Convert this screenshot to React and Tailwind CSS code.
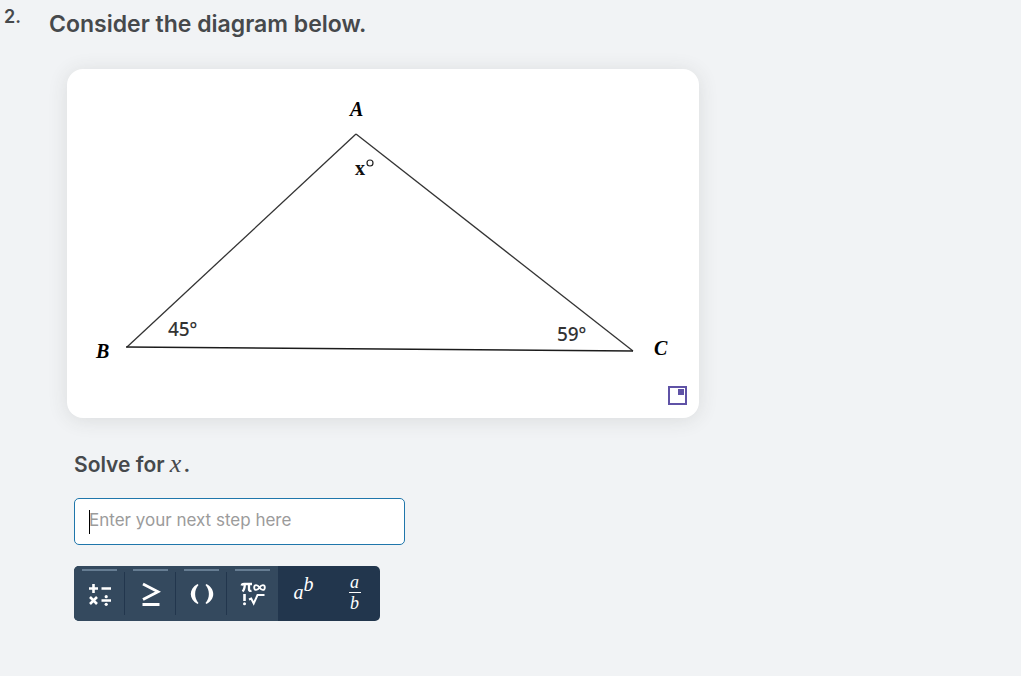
import { useState } from 'react';

const MathToolButton = ({ label, children }) => (
  <button
    type="button"
    aria-label={label}
    className="relative flex-1 flex items-center justify-center h-full bg-[#34495e] hover:bg-[#3d546b]"
  >
    <span className="absolute top-[3px] left-2 right-2 h-[2px] bg-[#667d93]" />
    {children}
  </button>
);

const Divider = () => <span className="w-px -ml-px my-1.5 bg-[#22364d] z-10" />;

const Triangle = () => (
  <svg viewBox="0 0 632 349" className="block w-full h-auto" role="img" aria-label="Triangle ABC">
    <g fill="none" stroke="#333" strokeWidth="1.3" strokeLinejoin="round">
      <path d="M289 65 L60 278" />
      <path d="M289 65 L566 282" />
      <path d="M59 278 L566 282" stroke="#1c1c1c" strokeWidth="1.6" />
    </g>
    <g fontFamily="'Liberation Serif', serif" fontWeight="700" fontStyle="italic" fontSize="20" fill="#000">
      <text x="283" y="47">A</text>
      <text x="29" y="289">B</text>
      <text x="587" y="286">C</text>
    </g>
    <text x="288" y="106" fontFamily="'Liberation Serif', serif" fontWeight="700" fontSize="20" fill="#111">x</text>
    <circle cx="303" cy="94" r="3" fill="none" stroke="#222" strokeWidth="1.2" />
    <g fontFamily="'Noto Sans', sans-serif" fontWeight="500" fontSize="19" fill="#333">
      <text x="101" y="267">45º</text>
      <text x="490" y="272">59º</text>
    </g>
  </svg>
);

const App = () => {
  const [step, setStep] = useState('');

  return (
    <main className="min-h-screen flex items-start bg-[#f1f3f5] pl-1 font-[Inter,sans-serif] text-[#46494c]">
      <span className="w-[45px] shrink-0 pt-1 text-lg leading-[26px] font-semibold">2.</span>

      <div className="flex-1 min-w-0 pr-4">
        <h1 className="pt-2 text-[23px] leading-8 font-semibold">Consider the diagram below.</h1>

        {/* DIAGRAM */}
        <div className="relative mt-[29px] ml-[18px] max-w-[632px] rounded-2xl bg-white shadow-[0_2px_20px_rgba(60,60,50,0.12)]">
          <Triangle />
          <button type="button" aria-label="Expand diagram" className="absolute right-3 bottom-[13px] cursor-pointer">
            <svg width="20" height="20" viewBox="0 0 20 20" className="block">
              <rect x="2" y="2" width="17" height="17" fill="none" stroke="#5f52a6" strokeWidth="2" />
              <rect x="11" y="4" width="6" height="6" fill="#5f52a6" />
            </svg>
          </button>
        </div>

        {/* ANSWER */}
        <div className="mt-8 ml-[25px]">
          <label htmlFor="step" className="block h-7 text-[21px] leading-7 font-semibold">
            Solve for <span className="mr-0.5 font-['Liberation_Serif',serif] font-normal italic text-[26px] leading-7">x</span>.
          </label>

          <div className="relative mt-5 max-w-[331px]">
            <input
              id="step"
              type="text"
              value={step}
              placeholder="Enter your next step here"
              autoComplete="off"
              onChange={(e) => setStep(e.target.value)}
              className="block w-full h-[47px] px-3.5 pb-1 bg-white border border-[#1f76ab] rounded-[5px] text-[17px] outline-none placeholder:text-[#9b9b9b]"
            />
            {!step && <span className="absolute left-[15px] top-3 w-px h-6 bg-black pointer-events-none" />}
          </div>

          {/* MATH TOOLBAR */}
          <div className="flex mt-[21px] max-w-[306px] h-[55px] rounded-[5px] overflow-hidden bg-[#22364d] text-white">
            <MathToolButton label="Operators">
              <svg width="24" height="24" viewBox="0 0 24 24" fill="none" stroke="currentColor" strokeWidth="2.6">
                <path d="M1 6.500h9M5.500 2v9M13.500 6.500h9.500" />
                <path d="M2 15l7 7M9 15l-7 7M13.500 18.500h9.500" />
                <circle cx="18.200" cy="14.700" r="1.600" fill="currentColor" stroke="none" />
                <circle cx="18.200" cy="22.300" r="1.600" fill="currentColor" stroke="none" />
              </svg>
            </MathToolButton>
            <Divider />
            <MathToolButton label="Inequalities">
              <svg width="20" height="26" viewBox="0 0 20 26" fill="none" stroke="currentColor" strokeWidth="2.8">
                <path d="M2 3l15 7.800L2 18.600M1.500 23.500h17" />
              </svg>
            </MathToolButton>
            <Divider />
            <MathToolButton label="Brackets">
              <svg width="24" height="22" viewBox="0 0 24 22" fill="currentColor">
                <path d="M7.500 1C-1.500 6-1.500 16 7.500 21L8.500 20C4 15 4 7 8.500 2Z" />
                <path d="M16.500 1C25.500 6 25.500 16 16.500 21L15.500 20C20 15 20 7 15.500 2Z" />
              </svg>
            </MathToolButton>
            <Divider />
            <MathToolButton label="Symbols">
              <svg width="26" height="26" viewBox="0 0 26 26" fill="none" stroke="currentColor" strokeWidth="2.3">
                <path d="M1.500 4.500Q2 3 4 3H12M4.800 3Q4.800 8.500 2.500 10.300M9 3V8.500Q9 10.300 11.500 9.800" />
                <path d="M19.500 6.500C17.500 3.500 14.200 3.300 14.200 6.500S17.500 9.500 19.500 6.500S24.800 3.300 24.800 6.500S21.500 9.500 19.500 6.500Z" strokeWidth="1.900" />
                <path d="M4.500 13v7" strokeWidth="2.600" />
                <circle cx="4.500" cy="22.800" r="1.500" fill="currentColor" stroke="none" />
                <path d="M9 18.500l2.200-1 2.500 5L17.500 14h7" strokeWidth="2" />
              </svg>
            </MathToolButton>
            <button
              type="button"
              aria-label="Exponent"
              className="flex-1 flex items-start justify-center pt-2 font-['Liberation_Serif',serif] italic text-xl leading-5 hover:bg-[#2b425c]"
            >
              <span className="pt-2">a</span>
              <span>b</span>
            </button>
            <button
              type="button"
              aria-label="Fraction"
              className="flex-1 flex flex-col items-center pt-1.5 font-['Liberation_Serif',serif] italic text-lg leading-5 hover:bg-[#2b425c]"
            >
              <span className="w-3 border-b border-white">a</span>
              <span>b</span>
            </button>
          </div>
        </div>
      </div>
    </main>
  );
};

export default App;
